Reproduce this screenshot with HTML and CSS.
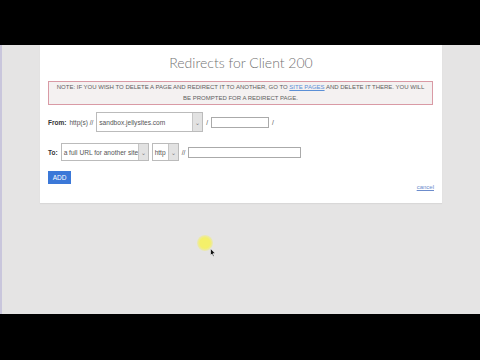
FILE: index.html
```html
<!DOCTYPE html>
<html lang="en">
<head>
    <meta charset="UTF-8">
    <title>Redirects for Client 200</title>
    <link rel="stylesheet" href="styles.css">
</head>
<body>
    <div class="bar"></div>
    <div class="desktop">
        <div class="edge"></div>
        <div class="panel">
            <h2>Redirects for Client 200</h2>
            <div class="notice">
                NOTE: IF YOU WISH TO DELETE A PAGE AND REDIRECT IT TO ANOTHER, GO TO <a href="#">SITE PAGES</a> AND DELETE IT THERE. YOU WILL<br>BE PROMPTED FOR A REDIRECT PAGE.
            </div>
            <div class="row from">
                <b>From:</b>
                <span>http(s) //</span>
                <div class="select site">
                    <span class="val">sandbox.jellysites.com</span>
                    <span class="arrow">&#8964;</span>
                </div>
                <span>/</span>
                <div class="input short"></div>
                <span>/</span>
            </div>
            <div class="row to">
                <b>To:</b>
                <div class="select kind">
                    <span class="val">a full URL for another site</span>
                    <span class="arrow">&#8964;</span>
                </div>
                <div class="select proto">
                    <span class="val">http</span>
                    <span class="arrow">&#8964;</span>
                </div>
                <span>//</span>
                <div class="input long"></div>
            </div>
            <button class="add">ADD</button>
            <div class="foot"><a href="#">cancel</a></div>
        </div>
        <div class="pointer">
            <div class="glow"></div>
            <svg width="6" height="9" viewBox="0 0 6 9"><path d="M0.5 0.5 L0.5 7.5 L2 6 L3.2 8.5 L4.2 8 L3 5.6 L5.3 5.6 Z" fill="#111" stroke="#fff" stroke-width="0.6"/></svg>
        </div>
    </div>
    <div class="bar bottom"></div>
</body>
</html>
```

FILE: styles.css
```css
body {
    margin: 0;
    background: #000;
    font-family: "Liberation Sans", Arial, sans-serif;
    overflow: hidden;
}

.bar {
    height: 45px;
    background: #000;
}

.bar.bottom {
    height: 46px;
}

.desktop {
    position: relative;
    height: 269px;
    background: #e5e4e4;
    display: flex;
    align-items: flex-start;
}

.edge {
    width: 2px;
    height: 100%;
    background: #c9c6dc;
    margin-right: 38px;
}

.panel {
    width: 402px;
    height: 158px;
    background: #fff;
    box-sizing: border-box;
    padding: 0 8px 0 8px;
    box-shadow: 0 1px 1px rgba(0, 0, 0, 0.05);
}

h2 {
    margin: 9px 0 0;
    text-align: center;
    font-family: Lato, "Open Sans", sans-serif;
    font-weight: 300;
    font-size: 14px;
    line-height: 17px;
    color: #737373;
}

.notice {
    margin: 10px 1px 0 0;
    border: 1px solid #d99aa5;
    background: #f4f1f1;
    color: #606060;
    font-size: 6px;
    line-height: 11px;
    text-align: center;
    padding: 0 2px;
    height: 22px;
    white-space: nowrap;
}

.notice a {
    color: #5b8fd6;
}

.row {
    display: flex;
    align-items: center;
    gap: 3px;
    font-size: 6.5px;
    color: #555;
    white-space: nowrap;
}

.row b {
    color: #333;
}

.from {
    margin-top: 7px;
    height: 20px;
}

.to {
    margin-top: 11px;
    height: 18px;
}

.select {
    display: flex;
    align-items: stretch;
    height: 100%;
    box-sizing: border-box;
    border: 1px solid #bbb;
    background: #fff;
    overflow: hidden;
}

.select .val {
    flex: 1;
    display: flex;
    align-items: center;
    padding-left: 2px;
    font-size: 6.6px;
    color: #555;
    overflow: hidden;
}

.select .arrow {
    flex: none;
    width: 9px;
    background: #e2e2e2;
    border-left: 1px solid #c6c6c6;
    display: flex;
    align-items: center;
    justify-content: center;
    font-size: 6px;
    color: #777;
}

.site {
    width: 107px;
}

.kind {
    width: 88px;
}

.proto {
    width: 27px;
}

.input {
    height: 11px;
    box-sizing: border-box;
    border: 1px solid #aaa;
    background: #fff;
}

.short {
    width: 58px;
}

.long {
    width: 113px;
}

.add {
    display: block;
    margin-top: 10px;
    width: 23px;
    height: 13px;
    padding: 0;
    border: none;
    background: #3b78d8;
    color: #fff;
    font-family: "Liberation Sans", Arial, sans-serif;
    font-size: 6.5px;
}

.foot {
    text-align: right;
    font-size: 6px;
    margin-top: 0;
}

.foot a {
    color: #6c8ccc;
}

.pointer {
    position: absolute;
    left: 197px;
    top: 190px;
}

.glow {
    width: 16px;
    height: 16px;
    border-radius: 50%;
    background: radial-gradient(circle, #f4f06a 45%, rgba(240, 236, 120, 0.4) 70%, rgba(240, 236, 140, 0) 100%);
}

.pointer svg {
    position: absolute;
    left: 13px;
    top: 13px;
}
```
